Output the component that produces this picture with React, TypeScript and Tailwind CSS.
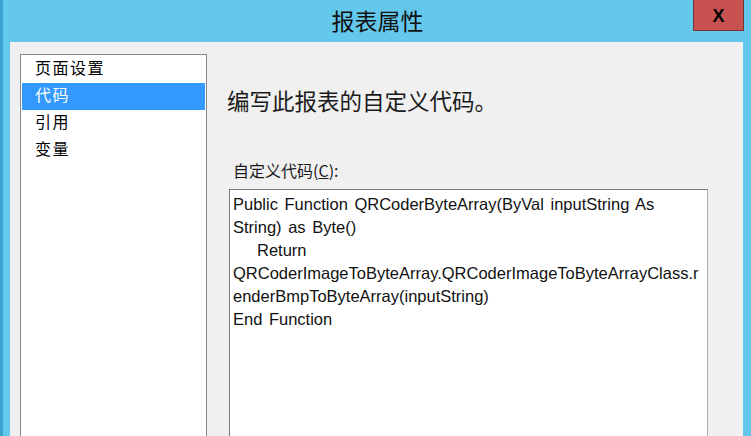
import React from 'react';

const codeLines = [
  { text: 'Public Function QRCoderByteArray(ByVal inputString As', indent: false },
  { text: 'String) as Byte()', indent: false },
  { text: 'Return', indent: true },
  { text: 'QRCoderImageToByteArray.QRCoderImageToByteArrayClass.r', indent: false },
  { text: 'enderBmpToByteArray(inputString)', indent: false },
  { text: 'End Function', indent: false },
];

const navItems = ['页面设置', '代码', '引用', '变量'];

const App = () => {
  return (
    <div
      className="relative w-[751px] h-[436px] overflow-hidden bg-[#63c8eb] flex flex-col"
      style={{ fontFamily: '"Noto Sans CJK SC", "Noto Sans", sans-serif' }}
    >
      {/* left frame edge */}
      <div className="absolute left-0 top-0 bottom-0 w-[3px] bg-[#3aa3cf]" />

      {/* Title bar */}
      <div className="h-[42px] shrink-0 flex items-center justify-center">
        <span className="text-[23px] leading-none text-[#111] mt-[-2px] ml-[4px]">报表属性</span>
      </div>
      <button className="absolute top-0 left-[693px] w-[51px] h-[31px] bg-[#c75050] border border-[#7a3434] border-t-0 flex items-center justify-center">
        <span
          className="text-[18px] font-bold leading-none text-black mt-[2px]"
          style={{ fontFamily: '"Liberation Sans", Arial, sans-serif' }}
        >
          X
        </span>
      </button>

      {/* Body */}
      <div className="flex-1 ml-[10px] mr-[8px] bg-[#f0f0f0] flex pl-[10px] pt-[12px] overflow-hidden">
        {/* Nav list */}
        <div className="w-[187px] shrink-0 bg-white border border-[#828790] border-b-0 pt-[1px] px-[1px] flex flex-col h-[400px]">
          {navItems.map((item, i) => (
            <div
              key={item}
              className={`h-[27px] flex items-center pl-[13px] pb-[5px] text-[16px] tracking-[1.5px] leading-none ${
                i === 1 ? 'bg-[#3399ff] text-white' : 'text-black'
              }`}
            >
              {item}
            </div>
          ))}
        </div>

        {/* Right panel */}
        <div className="ml-[22px] flex flex-col flex-1 pr-[35px]">
          <div className="mt-[35px] ml-[-2px] text-[22.5px] leading-none text-[#1a1a1a]">
            编写此报表的自定义代码。
          </div>
          <div className="mt-[50px] pl-[4px] text-[16px] leading-none text-[#1a1a1a]">
            自定义代码(<span className="underline">C</span>):
          </div>
          <div
            className="mt-[11px] flex-1 bg-white border border-[#abadb3] border-t-[#7a7a7a] border-l-[#7a7a7a] border-b-0 px-[3px] pt-[3px]"
            style={{ fontFamily: '"Liberation Sans", Arial, sans-serif', wordSpacing: '2px' }}
          >
            {codeLines.map((line, i) => (
              <div
                key={i}
                className={`text-[16.5px] leading-[23px] text-[#111] whitespace-pre ${line.indent ? 'pl-[24px]' : ''}`}
              >
                {line.text}
              </div>
            ))}
          </div>
        </div>
      </div>
    </div>
  );
};

export default App;
